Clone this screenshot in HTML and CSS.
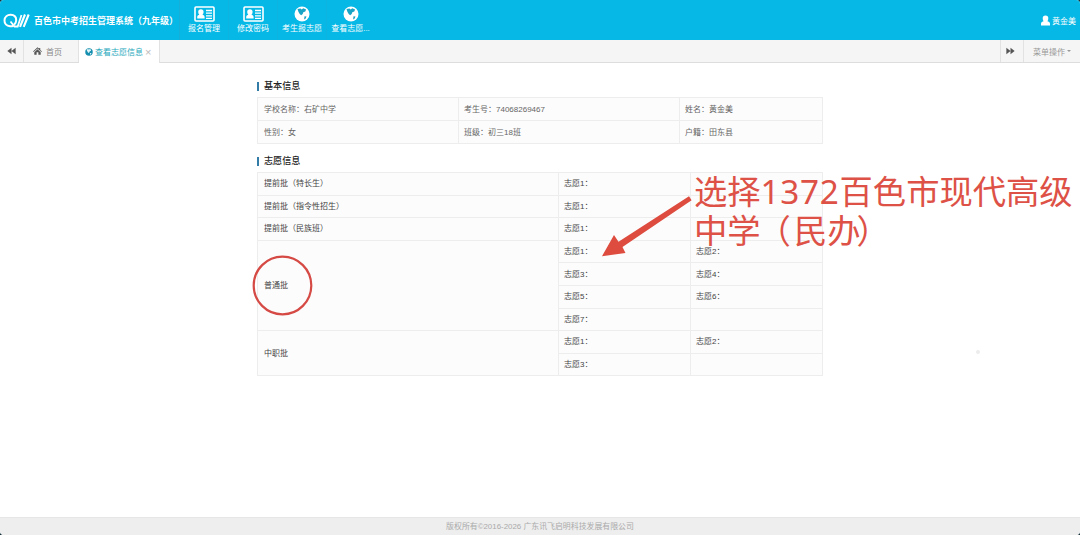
FILE: index.html
```html
<!DOCTYPE html>
<html lang="zh-CN">
<head>
<meta charset="utf-8">
<title>百色市中考招生管理系统</title>
<link rel="stylesheet" href="styles.css">
</head>
<body>
<svg width="0" height="0" class="defs">
  <symbol id="card" viewBox="0 0 21 16">
    <rect x="1" y="1" width="19" height="14" rx="1" fill="none" stroke="#fff" stroke-width="1.6"/>
    <path d="M3.200 12.500V10.800q0-1.600 2.100-2.100Q4.200 7.600 4.200 5.900q0-2.700 2.700-2.700T9.600 5.900q0 1.700-1.100 2.800 2.100.5 2.100 2.100v1.700z" fill="#fff"/>
    <path d="M12 4.500h6M12 7.200h6M12 9.900h6M12 12.300h6" stroke="#fff" stroke-width="1.300"/>
  </symbol>
  <symbol id="globe" viewBox="0 0 16 16">
    <circle cx="8" cy="8" r="7.500" fill="currentColor"/>
    <path class="land" d="M3.500 3l3-.6 1.200 1.200 1.600-1.400 2.800 1.300-.8 2-2 .7-.6 1.900-1.500 1.200-1.500-1.200-1.300-2.400zM10.500 10.300l2 .3-.8 1.900-1.600.9z"/>
  </symbol>
  <symbol id="rewind" viewBox="0 0 10 8">
    <path d="M5 .3v7.400L.4 4zM9.600.3v7.400L5 4z" fill="#555"/>
  </symbol>
</svg>
<div class="app">
  <header class="header">
    <div class="brand">
      <svg class="logo" viewBox="0 0 27 15">
        <path d="M10.500 12.600Q9 13.500 7 13.300C3.500 13 1.300 10.500 1.500 7.300 1.700 4 4.300 1.600 7.700 1.700c3.400.1 5.500 2.300 5.500 5.300 0 2-.8 3.700-2.100 4.800" fill="none" stroke="#fff" stroke-width="2"/>
        <path d="M7.500 8.500l4 5h3.200L18.500 2" fill="none" stroke="#fff" stroke-width="1.800"/>
        <path d="M17 13.800L22 1.500M20.700 13.800L25.700 1.500" stroke="#fff" stroke-width="2.100"/>
      </svg>
      <span class="title">百色市中考招生管理系统（九年级）</span>
    </div>
    <nav class="menu">
      <a class="item"><svg class="card"><use href="#card"/></svg><span>报名管理</span></a>
      <a class="item"><svg class="card"><use href="#card"/></svg><span>修改密码</span></a>
      <a class="item"><svg class="globe"><use href="#globe"/></svg><span>考生报志愿</span></a>
      <a class="item"><svg class="globe"><use href="#globe"/></svg><span>查看志愿...</span></a>
    </nav>
    <div class="user">
      <svg class="person" viewBox="0 0 9 11"><path d="M0 10.500V8.500Q0 6.800 2.600 6.200 1.700 5 1.700 3.200 1.700.4 4.500.4T7.300 3.200Q7.300 5 6.400 6.200 9 6.800 9 8.500v2z" fill="#fff"/></svg>
      <span>黄金美</span>
    </div>
  </header>

  <div class="tabs">
    <div class="tab arrow"><svg><use href="#rewind"/></svg></div>
    <div class="tab home">
      <svg viewBox="0 0 10 9"><path d="M5 .3l1.900 1.800V1h1.200v2.300L10 5l-.6.600L5 1.700.6 5.600 0 5zM5 2.600l3.600 3.200V8.800H6V6H4v2.800H1.400v-3z" fill="#555"/></svg>
      <span>首页</span>
    </div>
    <div class="tab active">
      <svg viewBox="0 0 16 16">
        <circle cx="8" cy="8" r="7.500" fill="#168faf"/>
        <path d="M3 3l3.500-.8 1.200 1.400 1.600-1.400 3.200 1.500-1 2.300-2 .7-.6 1.900-1.500 1.500-1.700-1.500-1.500-2.400zM10 10l3 .3-1 2.400-2 .9z" fill="#e2f5f9"/>
      </svg>
      <span>查看志愿信息</span>
      <i>×</i>
    </div>
    <div class="tab arrow forward"><svg><use href="#rewind"/></svg></div>
    <div class="tab ops"><span>菜单操作</span><b class="caret"></b></div>
  </div>

  <main class="content">
    <h2>基本信息</h2>
    <table class="info">
      <colgroup><col class="i1"><col class="i2"><col></colgroup>
      <tr><td>学校名称：右矿中学</td><td>考生号：74068269467</td><td>姓名：黄金美</td></tr>
      <tr><td>性别：女</td><td>班级：初三18班</td><td>户籍：田东县</td></tr>
    </table>
    <h2>志愿信息</h2>
    <table class="wishes">
      <colgroup><col class="w1"><col class="w2"><col></colgroup>
      <tr><th>提前批（特长生）</th><td>志愿1：</td><td></td></tr>
      <tr><th>提前批（指令性招生）</th><td>志愿1：</td><td></td></tr>
      <tr><th>提前批（民族班）</th><td>志愿1：</td><td></td></tr>
      <tr><th rowspan="4">普通批</th><td>志愿1：</td><td>志愿2：</td></tr>
      <tr><td>志愿3：</td><td>志愿4：</td></tr>
      <tr><td>志愿5：</td><td>志愿6：</td></tr>
      <tr><td>志愿7：</td><td></td></tr>
      <tr><th rowspan="2">中职批</th><td>志愿1：</td><td>志愿2：</td></tr>
      <tr><td>志愿3：</td><td></td></tr>
    </table>
  </main>

  <footer class="footer">版权所有©2016-2026 广东讯飞启明科技发展有限公司</footer>

  <svg class="marks" viewBox="0 0 1080 535">
    <circle cx="282.500" cy="285.500" r="28.800" fill="none" stroke="#d54a45" stroke-width="2.200"/>
    <path d="M689 196.300L691.600 200.300 622.500 247 625.500 253 602 256.200 614 235 618.500 241.800z" fill="#dd4c3f"/>
    <circle cx="978" cy="352" r="2" fill="#ececec"/>
  </svg>
  <div class="note">选择<span class="num">1372</span>百色市现代高级<br>中学<span class="open">（</span>民办<span class="close">）</span></div>
</div>
</body>
</html>
```
FILE: styles.css
```css
* { box-sizing: border-box; }
body {
  margin: 0;
  background: #16343d;
  font-family: "Liberation Sans", "Noto Sans CJK SC", sans-serif;
  font-size: 8px;
  color: #444;
}
.defs { position: absolute; }
.app {
  position: relative;
  display: flex;
  flex-direction: column;
  width: 1080px;
  height: 535px;
  overflow: hidden;
  background: #fff;
  border-radius: 4px;
}
.header {
  display: flex;
  flex: none;
  height: 40px;
  background: #05b8e6;
  color: #fff;
}
.brand {
  display: flex;
  align-items: center;
  width: 180px;
  padding-left: 3px;
  border-right: 1px solid #16afdb;
}
.logo { flex: none; width: 27px; height: 15px; }
.title {
  margin-left: 4px;
  font-size: 9px;
  font-weight: bold;
  white-space: nowrap;
}
.menu { display: flex; }
.item {
  display: flex;
  flex-direction: column;
  align-items: center;
  width: 49px;
  padding-top: 6px;
  line-height: 10px;
  white-space: nowrap;
  border-right: 1px solid #0fb3e0;
}
.item:last-child { width: 47px; border-right: 0; }
.item svg { height: 16px; margin-bottom: 2px; }
.card { width: 21px; }
.globe { width: 16px; }
.land { fill: #19a3c4; }
.user {
  display: flex;
  align-items: center;
  margin-left: auto;
  padding-right: 4px;
  gap: 2px;
}
.person { width: 9px; height: 11px; }

.tabs {
  display: flex;
  flex: none;
  height: 23px;
  background: #f5f5f5;
  border-bottom: 1px solid #ddd;
  color: #888;
}
.tab {
  display: flex;
  align-items: center;
  height: 22px;
  border-right: 1px solid #e2e2e2;
}
.arrow { width: 24px; justify-content: center; }
.arrow svg { width: 9px; height: 8px; }
.home { width: 55px; padding-left: 9px; gap: 4px; }
.home svg { width: 9px; height: 8px; }
.active {
  width: 81px;
  height: 23px;
  padding-left: 6px;
  gap: 2px;
  background: #fff;
  color: #27a9bd;
}
.active svg { width: 8px; height: 8px; }
.active i { font-style: normal; font-size: 11px; color: #bbb; }
.forward {
  margin-left: auto;
  border-left: 1px solid #e2e2e2;
}
.forward svg { margin-right: 3px; transform: scaleX(-1); }
.ops { width: 56px; padding-left: 9px; gap: 2px; border-right: 0; color: #999; }
.caret {
  border: 2px solid transparent;
  border-top-color: #999;
  border-bottom: 0;
}

.content { flex: 1; width: 566px; margin-left: 257px; padding-top: 17px; }
h2 {
  height: 17px;
  margin: 0;
  padding: 2px 0 6px;
  line-height: 9px;
  font-size: 9.1px;
  font-weight: 500;
  color: #222;
}
h2::before {
  content: "";
  display: inline-block;
  width: 2px;
  height: 9px;
  margin-right: 5px;
  vertical-align: top;
  background: #337ca8;
}
table {
  width: 566px;
  table-layout: fixed;
  border-collapse: collapse;
  background: #fcfcfc;
}
th,
td {
  padding: 1px 0 0 6px;
  border: 1px solid #ededed;
  line-height: 12px;
  font-weight: normal;
  text-align: left;
}
td + td,
.wishes td { padding-left: 5px; }
.info { height: 47px; margin-bottom: 11px; color: #666; }
.i1 { width: 201px; }
.i2 { width: 221px; }
.wishes { height: 204px; }
.w1 { width: 301px; }
.w2 { width: 132px; }
.info tr, .wishes tr { height: 22.6px; }

.footer {
  flex: none;
  height: 18px;
  background: #eee;
  border-top: 1px solid #e6e6e6;
  color: #aaa;
  font-size: 7.9px;
  line-height: 17px;
  text-align: center;
}
.marks {
  position: absolute;
  left: 0;
  top: 0;
  width: 1080px;
  height: 535px;
}
.note {
  position: absolute;
  left: 694px;
  top: 172px;
  font-family: "Noto Sans", "Noto Sans CJK SC", sans-serif;
  font-size: 33.3px;
  line-height: 39px;
  white-space: nowrap;
  color: #dd5146;
}
.num { letter-spacing: .7px; }
.open { margin: 0 3px 0 -3px; }
.close { margin-left: -4px; }
```
